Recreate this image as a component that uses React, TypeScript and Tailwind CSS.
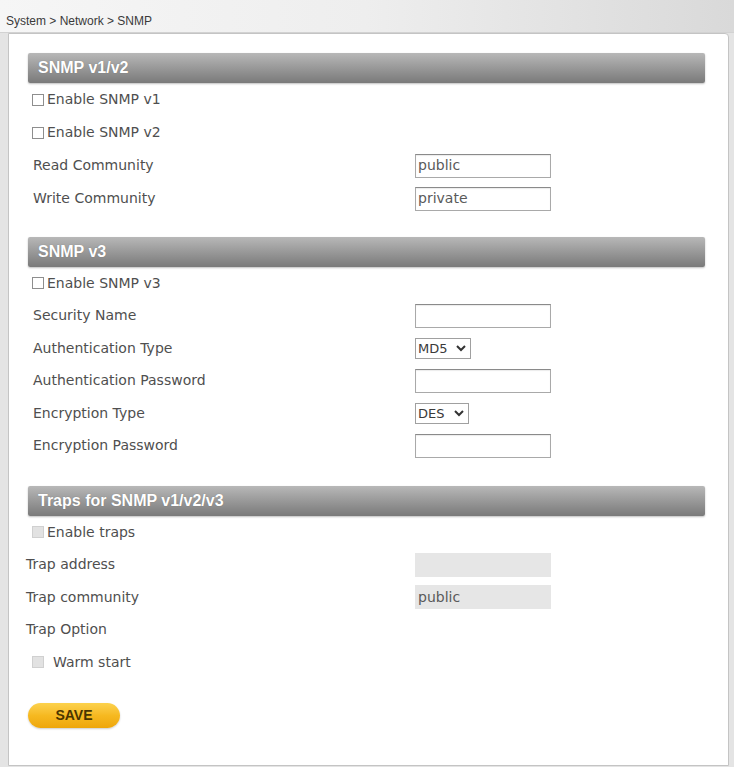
import React from 'react';

const labelFont = "font-['DejaVu_Sans',sans-serif] text-[14px] text-[#4f4f4f]";

const SectionHeader: React.FC<{ title: string; className?: string }> = ({ title, className = '' }) => (
  <div
    className={`h-[30px] flex items-center pl-[10px] rounded-[2px] bg-gradient-to-b from-[#b8b8b8] to-[#7a7a7a] shadow-[0_1px_2px_rgba(0,0,0,0.25)] ${className}`}
  >
    <span className="font-['Liberation_Sans',Arial,sans-serif] font-bold text-[16px] text-white [text-shadow:0_0_1px_rgba(0,0,0,0.3)]">
      {title}
    </span>
  </div>
);

interface RowProps {
  label: string;
  height: string;
  shift?: boolean;
  children?: React.ReactNode;
}

const Row: React.FC<RowProps> = ({ label, height, shift = false, children }) => (
  <div className={`grid grid-cols-[387px_1fr] items-center ${height}`}>
    <span className={`${labelFont} ${shift ? 'ml-[-2px]' : 'ml-[5px]'}`}>{label}</span>
    <div className="flex items-center">{children}</div>
  </div>
);

const CheckRow: React.FC<{ label: string; height: string; disabled?: boolean; gap?: string }> = ({
  label,
  height,
  disabled = false,
  gap = 'gap-[3px]',
}) => (
  <div className={`flex items-center ${height}`}>
    <div className={`flex items-center ml-[4px] ${gap}`}>
      <span
        className={`w-[12px] h-[12px] border ${
          disabled ? 'border-[#d0d0d0] bg-[#e2e2e2]' : 'border-[#8e8e8e] bg-white'
        }`}
      />
      <span className={labelFont}>{label}</span>
    </div>
  </div>
);

const TextBox: React.FC<{ value?: string; disabled?: boolean }> = ({ value = '', disabled = false }) => (
  <div
    className={`w-[136px] h-[24px] flex items-center pl-[2px] ${
      disabled
        ? 'bg-[#e6e6e6] border border-[#e6e6e6]'
        : 'bg-white border border-[#a9a9a9] border-t-[#8a8a8a] shadow-[inset_0_1px_1px_rgba(0,0,0,0.08)]'
    }`}
  >
    <span className={`${labelFont} text-[#5a5a5a]`}>{value}</span>
  </div>
);

const SelectBox: React.FC<{ value: string; width: string }> = ({ value, width }) => (
  <div className={`${width} h-[21px] flex items-center justify-between pl-[2px] pr-[4px] bg-white border border-[#a0a0a0]`}>
    <span className="font-['DejaVu_Sans',sans-serif] text-[13px] text-[#3a3a3a]">{value}</span>
    <svg width="10" height="7" viewBox="0 0 10 7">
      <polyline points="1,1 5,5 9,1" fill="none" stroke="#333" strokeWidth="2" />
    </svg>
  </div>
);

export default function App() {
  return (
    <div className="w-[734px] h-[767px] overflow-hidden bg-[#e4e4e4] flex flex-col">
      <div className="h-[33px] shrink-0 bg-gradient-to-r from-[#f6f6f6] via-[#eeeeee] to-[#d9d9d9] border-b border-[#d2d2d2] pl-[6px] pt-[7px]">
        <span className="font-['Liberation_Sans',Arial,sans-serif] text-[12px] text-[#3a3a3a]">
          System &gt; Network &gt; SNMP
        </span>
      </div>

      <div className="ml-[8px] mr-[5px] h-[733px] bg-white border border-[#c4c4c4] rounded-tr-[4px] pt-[19px] pl-[19px] pr-[23px] pb-[37px]">
        <SectionHeader title="SNMP v1/v2" />
        <CheckRow label="Enable SNMP v1" height="h-[33px]" />
        <CheckRow label="Enable SNMP v2" height="h-[33px]" />
        <Row label="Read Community" height="h-[33px]">
          <TextBox value="public" />
        </Row>
        <Row label="Write Community" height="h-[33px]">
          <TextBox value="private" />
        </Row>

        <SectionHeader title="SNMP v3" className="mt-[22px]" />
        <CheckRow label="Enable SNMP v3" height="h-[32.5px]" />
        <Row label="Security Name" height="h-[32.5px]">
          <TextBox />
        </Row>
        <Row label="Authentication Type" height="h-[32.5px]">
          <SelectBox value="MD5" width="w-[56px]" />
        </Row>
        <Row label="Authentication Password" height="h-[32.5px]">
          <TextBox />
        </Row>
        <Row label="Encryption Type" height="h-[32.5px]">
          <SelectBox value="DES" width="w-[54px]" />
        </Row>
        <Row label="Encryption Password" height="h-[32.5px]">
          <TextBox />
        </Row>

        <SectionHeader title="Traps for SNMP v1/v2/v3" className="mt-[24px]" />
        <CheckRow label="Enable traps" height="h-[32.5px]" disabled />
        <Row label="Trap address" height="h-[32.5px]" shift>
          <TextBox disabled />
        </Row>
        <Row label="Trap community" height="h-[32.5px]" shift>
          <TextBox value="public" disabled />
        </Row>
        <Row label="Trap Option" height="h-[32.5px]" shift />
        <CheckRow label="Warm start" height="h-[32.5px]" disabled gap="gap-[9px]" />

        <button className="mt-[24px] w-[92px] h-[25px] rounded-full bg-gradient-to-b from-[#fcd24c] via-[#f6b920] to-[#eea60a] shadow-[0_1px_2px_rgba(0,0,0,0.2)] flex items-center justify-center">
          <span className="font-['Liberation_Sans',Arial,sans-serif] font-bold text-[14px] text-[#4a3500]">SAVE</span>
        </button>
      </div>
    </div>
  );
}
